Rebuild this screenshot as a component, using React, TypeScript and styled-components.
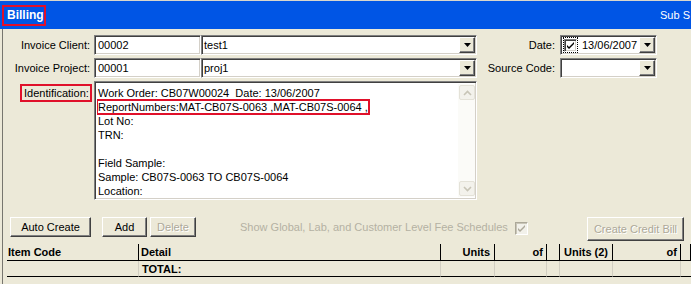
import React from "react";
import styled, { createGlobalStyle } from "styled-components";

const Global = createGlobalStyle`
  html, body { margin: 0; padding: 0; background: #ECE9D8; overflow: hidden; }
  body { font-family: "Liberation Sans", Arial, sans-serif; font-size: 11px; color: #000; }
`;

const Window = styled.div`
  width: 691px;
  height: 284px;
  box-sizing: border-box;
  overflow: hidden;
  display: flex;
  flex-direction: column;
  background: #ECE9D8;
  border-top: 1px solid #d8d6cc;
`;

const TitleBar = styled.div`
  height: 28px;
  flex: none;
  background: #0055e5;
  display: flex;
  align-items: center;
  padding-left: 2px;
  padding-right: 1px;
  color: #fff;
`;

const BillingTag = styled.div`
  box-sizing: border-box;
  height: 21px;
  width: 44px;
  border: 2px solid #e0102a;
  font-weight: bold;
  font-size: 12px;
  display: flex;
  align-items: center;
  padding-left: 3px;
`;

const TitleRight = styled.div`
  margin-left: auto;
  white-space: nowrap;
  font-size: 11px;
`;

const Content = styled.div`
  flex: 1;
  margin-left: 2px;
  border-left: 1px solid #77766f;
  display: flex;
  flex-direction: column;
`;

const FormGrid = styled.div`
  display: grid;
  grid-template-columns: 91px 107px 276px 83px 97px;
  grid-template-rows: 20px 20px 119px;
  row-gap: 3px;
  margin-top: 6px;
`;

const Label = styled.div`
  display: flex;
  align-items: center;
  justify-content: flex-end;
  padding-right: 4px;
  white-space: nowrap;
`;

const SideLabel = styled(Label)`
  padding-right: 5px;
`;

const IdLabel = styled.div`
  grid-column: 1;
  grid-row: 3;
  align-self: start;
  justify-self: end;
  margin-top: 3px;
  margin-right: 2px;
  box-sizing: border-box;
  height: 18px;
  width: 72px;
  border: 2px solid #e0102a;
  display: flex;
  align-items: center;
  padding-left: 2px;
  white-space: nowrap;
`;

const Sunken = styled.div`
  box-sizing: border-box;
  background: #fff;
  border: 1px solid;
  border-color: #808080 #fff #fff #808080;
  box-shadow: inset 1px 1px 0 #404040, inset -1px -1px 0 #d4d0c8;
`;

const TextField = styled(Sunken)`
  height: 20px;
  display: flex;
  align-items: center;
  padding: 0 3px;
  white-space: nowrap;
`;

const Combo = styled(Sunken)`
  height: 20px;
  display: flex;
  align-items: center;
  padding: 2px 1px 2px 2px;
  gap: 2px;
`;

const ComboText = styled.span`
  flex: 1;
  white-space: nowrap;
`;

const DropButton = styled.span`
  box-sizing: border-box;
  width: 16px;
  height: 16px;
  flex: none;
  background: #ECE9D8;
  border: 1px solid;
  border-color: #fff #404040 #404040 #fff;
  box-shadow: inset -1px -1px 0 #808080;
  display: flex;
  align-items: center;
  justify-content: center;
`;

const FocusRing = styled.span`
  box-sizing: border-box;
  height: 16px;
  padding: 0 1px;
  display: flex;
  align-items: center;
  outline: 1px dotted #000;
  outline-offset: -1px;
`;

const Check = styled.span<{ $disabled?: boolean }>`
  box-sizing: border-box;
  width: 13px;
  height: 13px;
  flex: none;
  display: flex;
  align-items: center;
  justify-content: center;
  background: ${(p) => (p.$disabled ? "#f2f1ea" : "#fff")};
  border: 1px solid;
  border-color: ${(p) =>
    p.$disabled ? "#aca899 #fff #fff #aca899" : "#808080 #fff #fff #808080"};
  box-shadow: ${(p) =>
    p.$disabled
      ? "inset 1px 1px 0 #c9c6b8"
      : "inset 1px 1px 0 #404040, inset -1px -1px 0 #d4d0c8"};
`;

const DateText = styled.span`
  flex: 1;
  padding-left: 2px;
  white-space: nowrap;
`;

const Memo = styled(Sunken)`
  grid-column: 2 / 4;
  grid-row: 3;
  display: flex;
  padding: 2px 1px 2px 2px;
`;

const MemoText = styled.div`
  flex: 1;
  padding: 2px 0 0 1px;
  line-height: 14px;
  white-space: pre;
  overflow: hidden;
`;

const Marked = styled.span`
  outline: 2px solid #e0102a;
  outline-offset: 0px;
`;

const ScrollBar = styled.div`
  width: 17px;
  flex: none;
  background: #fbfbf8;
  display: flex;
  flex-direction: column;
  justify-content: space-between;
  padding: 1px 0;
  box-sizing: border-box;
`;

const ScrollButton = styled.div`
  box-sizing: border-box;
  width: 16px;
  height: 15px;
  margin-left: 1px;
  border: 1px solid #e4e2d8;
  border-radius: 2px;
  background: #f3f2ec;
  display: flex;
  align-items: center;
  justify-content: center;
`;

const ActionRow = styled.div`
  display: flex;
  align-items: flex-start;
  margin-top: 17px;
  padding-left: 7px;
  height: 24px;
`;

const Button = styled.button<{ $w: number; $h?: number; $gap?: number }>`
  box-sizing: border-box;
  width: ${(p) => p.$w}px;
  height: ${(p) => p.$h ?? 20}px;
  margin-left: ${(p) => p.$gap ?? 0}px;
  padding: 0;
  background: #ECE9D8;
  border: 1px solid;
  border-color: #fff #404040 #404040 #fff;
  box-shadow: inset -1px -1px 0 #808080;
  font-family: "Liberation Sans", Arial, sans-serif;
  font-size: 11px;
  color: #000;
  &:disabled {
    color: #aca899;
    text-shadow: 1px 1px 0 #fff;
  }
`;

const CreditButton = styled(Button)`
  margin-left: auto;
  margin-right: 7px;
`;

const OptionText = styled.span`
  margin-left: 44px;
  margin-top: 4px;
  color: #b4b1a3;
  white-space: nowrap;
`;

const OptionCheck = styled(Check)`
  margin-left: 7px;
  margin-top: 5px;
`;

const Table = styled.div`
  margin-top: 3px;
  margin-left: 4px;
  display: grid;
  grid-template-columns: 132px 302px 54px 52px 13px 53px 68px 1fr;
`;

const HeadCell = styled.div<{ $align?: "left" | "right"; $pad?: number }>`
  height: 16px;
  border-bottom: 1px solid #000;
  border-right: 1px solid #000;
  font-weight: bold;
  display: flex;
  align-items: center;
  justify-content: ${(p) => (p.$align === "right" ? "flex-end" : "flex-start")};
  padding: ${(p) =>
    p.$align === "right" ? `0 ${p.$pad ?? 3}px 0 0` : `0 0 0 ${p.$pad ?? 2}px`};
  white-space: nowrap;
  &:last-child { border-right: none; }
`;

const BodyCell = styled.div<{ $pad?: number }>`
  height: 15px;
  border-bottom: 1px solid #000;
  border-right: 1px solid #d2cfc2;
  font-weight: bold;
  display: flex;
  align-items: center;
  padding-left: ${(p) => p.$pad ?? 2}px;
  white-space: nowrap;
  &:last-child { border-right: none; }
`;

const Arrow = () => (
  <svg width="7" height="4" viewBox="0 0 7 4">
    <path d="M0 0h7L3.5 4z" fill="#000" />
  </svg>
);

const Tick = ({ color }: { color: string }) => (
  <svg width="9" height="9" viewBox="0 0 9 9">
    <path d="M1 4l2 2 5-5v2L3 8 1 6z" fill={color} />
  </svg>
);

const Chevron = ({ up }: { up?: boolean }) => (
  <svg width="9" height="6" viewBox="0 0 9 6">
    <path
      d={up ? "M1 5l3.5-3.5L8 5" : "M1 1l3.5 3.5L8 1"}
      stroke="#c8c5b7"
      strokeWidth="1.6"
      fill="none"
    />
  </svg>
);

export default function App() {
  return (
    <>
      <Global />
      <Window>
        <TitleBar>
          <BillingTag>Billing</BillingTag>
          <TitleRight>Sub S</TitleRight>
        </TitleBar>
        <Content>
          <FormGrid>
            <Label>Invoice Client:</Label>
            <TextField>00002</TextField>
            <Combo>
              <ComboText>test1</ComboText>
              <DropButton><Arrow /></DropButton>
            </Combo>
            <SideLabel>Date:</SideLabel>
            <Combo>
              <FocusRing>
                <Check><Tick color="#000" /></Check>
              </FocusRing>
              <DateText>13/06/2007</DateText>
              <DropButton><Arrow /></DropButton>
            </Combo>

            <Label>Invoice Project:</Label>
            <TextField>00001</TextField>
            <Combo>
              <ComboText>proj1</ComboText>
              <DropButton><Arrow /></DropButton>
            </Combo>
            <SideLabel>Source Code:</SideLabel>
            <Combo>
              <ComboText />
              <DropButton><Arrow /></DropButton>
            </Combo>

            <IdLabel>Identification:</IdLabel>
            <Memo>
              <MemoText>
                {"Work Order: CB07W00024  Date: 13/06/2007\n"}
                <Marked>{"ReportNumbers:MAT-CB07S-0063 ,MAT-CB07S-0064 ,"}</Marked>
                {"\nLot No:\nTRN:\n\nField Sample:\nSample: CB07S-0063 TO CB07S-0064\nLocation:"}
              </MemoText>
              <ScrollBar>
                <ScrollButton><Chevron up /></ScrollButton>
                <ScrollButton><Chevron /></ScrollButton>
              </ScrollBar>
            </Memo>
          </FormGrid>

          <ActionRow>
            <Button $w={81}>Auto Create</Button>
            <Button $w={45} $gap={11}>Add</Button>
            <Button $w={46} $gap={3} disabled>Delete</Button>
            <OptionText>Show Global, Lab, and Customer Level Fee Schedules</OptionText>
            <OptionCheck $disabled><Tick color="#aca899" /></OptionCheck>
            <CreditButton $w={97} $h={24} disabled>Create Credit Bill</CreditButton>
          </ActionRow>

          <Table>
            <HeadCell $pad={1}>Item Code</HeadCell>
            <HeadCell>Detail</HeadCell>
            <HeadCell $align="right" $pad={4}>Units</HeadCell>
            <HeadCell $align="right">of</HeadCell>
            <HeadCell />
            <HeadCell $pad={4}>Units (2)</HeadCell>
            <HeadCell $align="right">of</HeadCell>
            <HeadCell />

            <BodyCell />
            <BodyCell $pad={3}>TOTAL:</BodyCell>
            <BodyCell />
            <BodyCell />
            <BodyCell />
            <BodyCell />
            <BodyCell />
            <BodyCell />
          </Table>
        </Content>
      </Window>
    </>
  );
}
